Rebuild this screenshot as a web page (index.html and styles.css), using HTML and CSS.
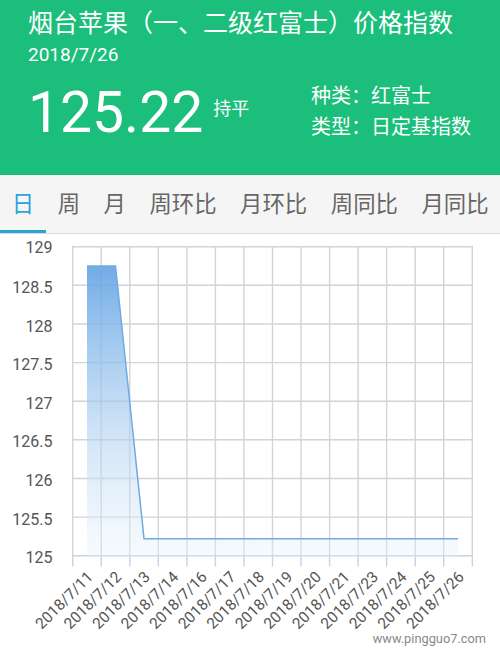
FILE: index.html
```html
<!DOCTYPE html>
<html lang="zh-CN">
<head>
<meta charset="utf-8">
<title>烟台苹果价格指数</title>
<link rel="stylesheet" href="styles.css">
</head>
<body>
<header class="hero">
  <h1 class="title">烟台苹果（一、二级红富士）价格指数</h1>
  <div class="date">2018/7/26</div>
  <div class="main">
    <div class="value-wrap">
      <span class="value">125.22</span>
      <span class="trend">持平</span>
    </div>
    <div class="info">
      <div class="info-line">种类：红富士</div>
      <div class="info-line">类型：日定基指数</div>
    </div>
  </div>
</header>
<nav class="tabs">
  <span class="tab active">日</span>
  <span class="tab">周</span>
  <span class="tab">月</span>
  <span class="tab">周环比</span>
  <span class="tab">月环比</span>
  <span class="tab">周同比</span>
  <span class="tab">月同比</span>
</nav>
<section class="chart">
  <svg class="chart-svg" width="500" height="415" viewBox="0 234 500 415" xmlns="http://www.w3.org/2000/svg">
    <defs>
      <linearGradient id="area" x1="0" y1="266" x2="0" y2="556" gradientUnits="userSpaceOnUse">
        <stop offset="0" stop-color="#64a5e4" stop-opacity="0.92"/>
        <stop offset="0.55" stop-color="#a9cdf0" stop-opacity="0.6"/>
        <stop offset="1" stop-color="#e6f2fc" stop-opacity="0.35"/>
      </linearGradient>
    </defs>
    <g class="grid" stroke="#d4d4d4" stroke-width="1.4" fill="none">
      <line x1="72.7" y1="246.7" x2="472.3" y2="246.7"/>
      <line x1="72.7" y1="285.3" x2="472.3" y2="285.3"/>
      <line x1="72.7" y1="324" x2="472.3" y2="324"/>
      <line x1="72.7" y1="362.6" x2="472.3" y2="362.6"/>
      <line x1="72.7" y1="401.2" x2="472.3" y2="401.2"/>
      <line x1="72.7" y1="439.8" x2="472.3" y2="439.8"/>
      <line x1="72.7" y1="478.5" x2="472.3" y2="478.5"/>
      <line x1="72.7" y1="517.1" x2="472.3" y2="517.1"/>
      <line x1="72.7" y1="246" x2="72.7" y2="556"/>
      <line x1="101.2" y1="246" x2="101.2" y2="556"/>
      <line x1="129.8" y1="246" x2="129.8" y2="556"/>
      <line x1="158.3" y1="246" x2="158.3" y2="556"/>
      <line x1="186.9" y1="246" x2="186.9" y2="556"/>
      <line x1="215.4" y1="246" x2="215.4" y2="556"/>
      <line x1="243.9" y1="246" x2="243.9" y2="556"/>
      <line x1="272.5" y1="246" x2="272.5" y2="556"/>
      <line x1="301" y1="246" x2="301" y2="556"/>
      <line x1="329.6" y1="246" x2="329.6" y2="556"/>
      <line x1="358.1" y1="246" x2="358.1" y2="556"/>
      <line x1="386.6" y1="246" x2="386.6" y2="556"/>
      <line x1="415.2" y1="246" x2="415.2" y2="556"/>
      <line x1="443.7" y1="246" x2="443.7" y2="556"/>
      <line x1="472.3" y1="246" x2="472.3" y2="556"/>
    </g>
    <g class="axis" stroke="#c6d5e4" stroke-width="1.4">
      <line x1="72" y1="555.7" x2="473" y2="555.7"/>
      <line x1="72.7" y1="555.7" x2="72.7" y2="566.5"/>
      <line x1="101.2" y1="555.7" x2="101.2" y2="566.5"/>
      <line x1="129.8" y1="555.7" x2="129.8" y2="566.5"/>
      <line x1="158.3" y1="555.7" x2="158.3" y2="566.5"/>
      <line x1="186.9" y1="555.7" x2="186.9" y2="566.5"/>
      <line x1="215.4" y1="555.7" x2="215.4" y2="566.5"/>
      <line x1="243.9" y1="555.7" x2="243.9" y2="566.5"/>
      <line x1="272.5" y1="555.7" x2="272.5" y2="566.5"/>
      <line x1="301" y1="555.7" x2="301" y2="566.5"/>
      <line x1="329.6" y1="555.7" x2="329.6" y2="566.5"/>
      <line x1="358.1" y1="555.7" x2="358.1" y2="566.5"/>
      <line x1="386.6" y1="555.7" x2="386.6" y2="566.5"/>
      <line x1="415.2" y1="555.7" x2="415.2" y2="566.5"/>
      <line x1="443.7" y1="555.7" x2="443.7" y2="566.5"/>
      <line x1="472.3" y1="555.7" x2="472.3" y2="566.5"/>
    </g>
    <polygon class="area" fill="url(#area)" points="87,266 115.5,266 144,538.7 458,538.7 458,555.7 87,555.7"/>
    <polyline class="line" fill="none" stroke="#6eaae3" stroke-width="1.5" points="87,266 115.5,266 144,538.7 458,538.7"/>
    <g class="ylabels" fill="#555" font-size="16" text-anchor="end">
      <text x="52.5" y="253">129</text>
      <text x="52.5" y="293.3">128.5</text>
      <text x="52.5" y="331.5">128</text>
      <text x="52.5" y="370.2">127.5</text>
      <text x="52.5" y="408.8">127</text>
      <text x="52.5" y="447.4">126.5</text>
      <text x="52.5" y="486">126</text>
      <text x="52.5" y="524.7">125.5</text>
      <text x="52.5" y="563.3">125</text>
    </g>
    <g class="xlabels" fill="#555" font-size="15.5" text-anchor="end">
      <text transform="translate(90 574) rotate(-45)" dy="5.5">2018/7/11</text>
      <text transform="translate(118.5 574) rotate(-45)" dy="5.5">2018/7/12</text>
      <text transform="translate(147 574) rotate(-45)" dy="5.5">2018/7/13</text>
      <text transform="translate(175.6 574) rotate(-45)" dy="5.5">2018/7/14</text>
      <text transform="translate(204.1 574) rotate(-45)" dy="5.5">2018/7/16</text>
      <text transform="translate(232.7 574) rotate(-45)" dy="5.5">2018/7/17</text>
      <text transform="translate(261.2 574) rotate(-45)" dy="5.5">2018/7/18</text>
      <text transform="translate(289.7 574) rotate(-45)" dy="5.5">2018/7/19</text>
      <text transform="translate(318.3 574) rotate(-45)" dy="5.5">2018/7/20</text>
      <text transform="translate(346.8 574) rotate(-45)" dy="5.5">2018/7/21</text>
      <text transform="translate(375.4 574) rotate(-45)" dy="5.5">2018/7/23</text>
      <text transform="translate(403.9 574) rotate(-45)" dy="5.5">2018/7/24</text>
      <text transform="translate(432.4 574) rotate(-45)" dy="5.5">2018/7/25</text>
      <text transform="translate(461 574) rotate(-45)" dy="5.5">2018/7/26</text>
    </g>
    <text class="watermark" x="486" y="643" text-anchor="end" fill="#8a8a8a" font-size="12.8">www.pingguo7.com</text>
  </svg>
</section>
</body>
</html>
```
FILE: styles.css
```css
* { box-sizing: border-box; }
html, body {
  margin: 0;
  padding: 0;
  background: #ffffff;
}
body {
  width: 500px;
  height: 649px;
  overflow: hidden;
  font-family: Roboto, "Noto Sans CJK SC", sans-serif;
}
.hero {
  background: #1bbe7b;
  color: #ffffff;
  height: 175px;
  padding: 9px 0 0 28px;
}
.title {
  margin: 0;
  font-size: 25px;
  font-weight: 400;
  line-height: 30px;
  white-space: nowrap;
}
.date {
  margin-top: 5px;
  font-size: 19px;
  line-height: 22px;
}
.main {
  display: grid;
  grid-template-columns: 283px 1fr;
  margin-top: 15px;
}
.value-wrap {
  display: flex;
  align-items: flex-start;
  margin-top: 3px;
}
.value {
  font-size: 57px;
  line-height: 57px;
}
.trend {
  margin-left: 10px;
  margin-top: 14px;
  font-size: 18px;
  line-height: 22px;
}
.info-line {
  font-size: 20px;
  line-height: 31px;
  white-space: nowrap;
}
.tabs {
  display: flex;
  height: 59px;
  background: #f5f5f5;
  border-bottom: 1px solid #dcdcdc;
}
.tab {
  padding: 4px 11.75px 0;
  font-size: 22.4px;
  line-height: 51px;
  height: 58px;
  color: #666666;
  border-bottom: 3px solid transparent;
  white-space: nowrap;
}
.tab.active {
  color: #2aa3d9;
  border-bottom-color: #2aa3d9;
}
.chart {
  height: 415px;
}
.chart-svg {
  display: block;
  font-family: Roboto, sans-serif;
}
```
